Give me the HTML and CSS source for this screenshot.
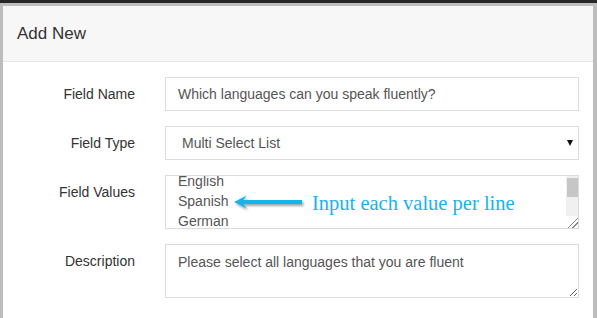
FILE: index.html
```html
<!DOCTYPE html>
<html lang="en">
<head>
  <meta charset="UTF-8">
  <title>Add New Field</title>
  <link rel="stylesheet" href="styles.css">
</head>
<body>
  <div class="modal">
    <div class="modal-header">
      <h4 class="modal-title">Add New</h4>
    </div>
    <form class="modal-body">
      <label class="form-label" for="fieldName">Field Name</label>
      <input class="form-control" id="fieldName" type="text" value="Which languages can you speak fluently?">

      <label class="form-label" for="fieldType">Field Type</label>
      <div class="select-wrap">
        <select class="form-control select" id="fieldType">
          <option>Multi Select List</option>
        </select>
      </div>

      <label class="form-label">Field Values</label>
      <div class="values-box">
        <div class="values-text">
          <div>English</div>
          <div>Spanish</div>
          <div>German</div>
        </div>
        <div class="scrollbar">
          <div class="thumb"></div>
          <div class="track"></div>
          <div class="grip"></div>
        </div>
        <div class="callout">
          <svg class="callout-arrow" width="80" height="22" viewBox="0 0 80 22">
            <defs>
              <filter id="sh" x="-20%" y="-50%" width="140%" height="200%">
                <feDropShadow dx="1.5" dy="2" stdDeviation="1.2" flood-color="#000" flood-opacity="0.35"/>
              </filter>
            </defs>
            <g filter="url(#sh)">
              <path d="M2 10 L14.5 3.5 L11.5 8 L70 8 L70 12 L11.5 12 L14.5 16.5 Z" fill="#17b3ef"/>
            </g>
          </svg>
          <span class="callout-text">Input each value per line</span>
        </div>
      </div>

      <label class="form-label" for="desc">Description</label>
      <textarea class="form-control textarea" id="desc">Please select all languages that you are fluent</textarea>
    </form>
  </div>
</body>
</html>
```

FILE: styles.css
```css
* { box-sizing: border-box; }
body {
  margin: 0;
  height: 318px;
  overflow: hidden;
  background: #bdbdbd;
  border-top: 3px solid #272727;
  padding: 3px 4px 0 3px;
  font-family: 'Liberation Sans', Arial, sans-serif;
  font-size: 14px;
  color: #333;
}
.modal { background: #fff; height: 100%; }
.modal-header {
  height: 56px;
  background: #f7f7f7;
  border-bottom: 1px solid #e5e5e5;
  padding: 18px 14px 0;
}
.modal-title { margin: 0; font-size: 17px; font-weight: normal; line-height: 20px; color: #333; }
.modal-body {
  display: grid;
  grid-template-columns: 132px 1fr;
  column-gap: 30px;
  row-gap: 15px;
  padding: 15px 14px 0 0;
  margin: 0;
}
.form-label {
  text-align: right;
  padding-top: 7px;
  line-height: 20px;
  color: #333;
}
.form-control {
  display: block;
  width: 100%;
  height: 34px;
  padding: 6px 12px;
  font-family: 'Liberation Sans', Arial, sans-serif;
  font-size: 14px;
  line-height: 20px;
  color: #555;
  background: #fff;
  border: 1px solid #dcdcdc;
  border-radius: 0;
  outline: none;
}
.select-wrap { position: relative; }
.select {
  appearance: none;
  -webkit-appearance: none;
  padding-left: 16px;
}
.select-wrap::after {
  content: "";
  position: absolute;
  right: 6px;
  top: 14px;
  border-left: 3.5px solid transparent;
  border-right: 3.5px solid transparent;
  border-top: 6px solid #111;
}
.values-box {
  position: relative;
  display: flex;
  height: 54px;
  border: 1px solid #dcdcdc;
}
.values-text {
  flex: 1;
  overflow: hidden;
  padding: 0 12px;
  line-height: 20px;
  color: #555;
}
.values-text div:first-child { margin-top: -5px; }
.scrollbar {
  width: 12px;
  display: flex;
  flex-direction: column;
  background: #f0f0f0;
  padding-top: 2px;
}
.thumb { height: 19px; background: #c6c6c6; margin: 0 0 0 1px; }
.track { flex: 1; }
.grip {
  height: 12px;
  background: #fff linear-gradient(135deg, transparent 55%, #888 55%, #888 62%, transparent 62%, transparent 75%, #888 75%, #888 82%, transparent 82%);
}
.callout {
  position: absolute;
  left: 66px;
  top: 16px;
  display: flex;
  align-items: center;
}
.callout-text {
  font-family: 'Liberation Serif', 'Times New Roman', serif;
  font-size: 20.5px;
  line-height: 22px;
  color: #17b3ef;
  white-space: nowrap;
}
.textarea {
  height: 54px;
  padding: 7px 12px;
  resize: vertical;
}
```
